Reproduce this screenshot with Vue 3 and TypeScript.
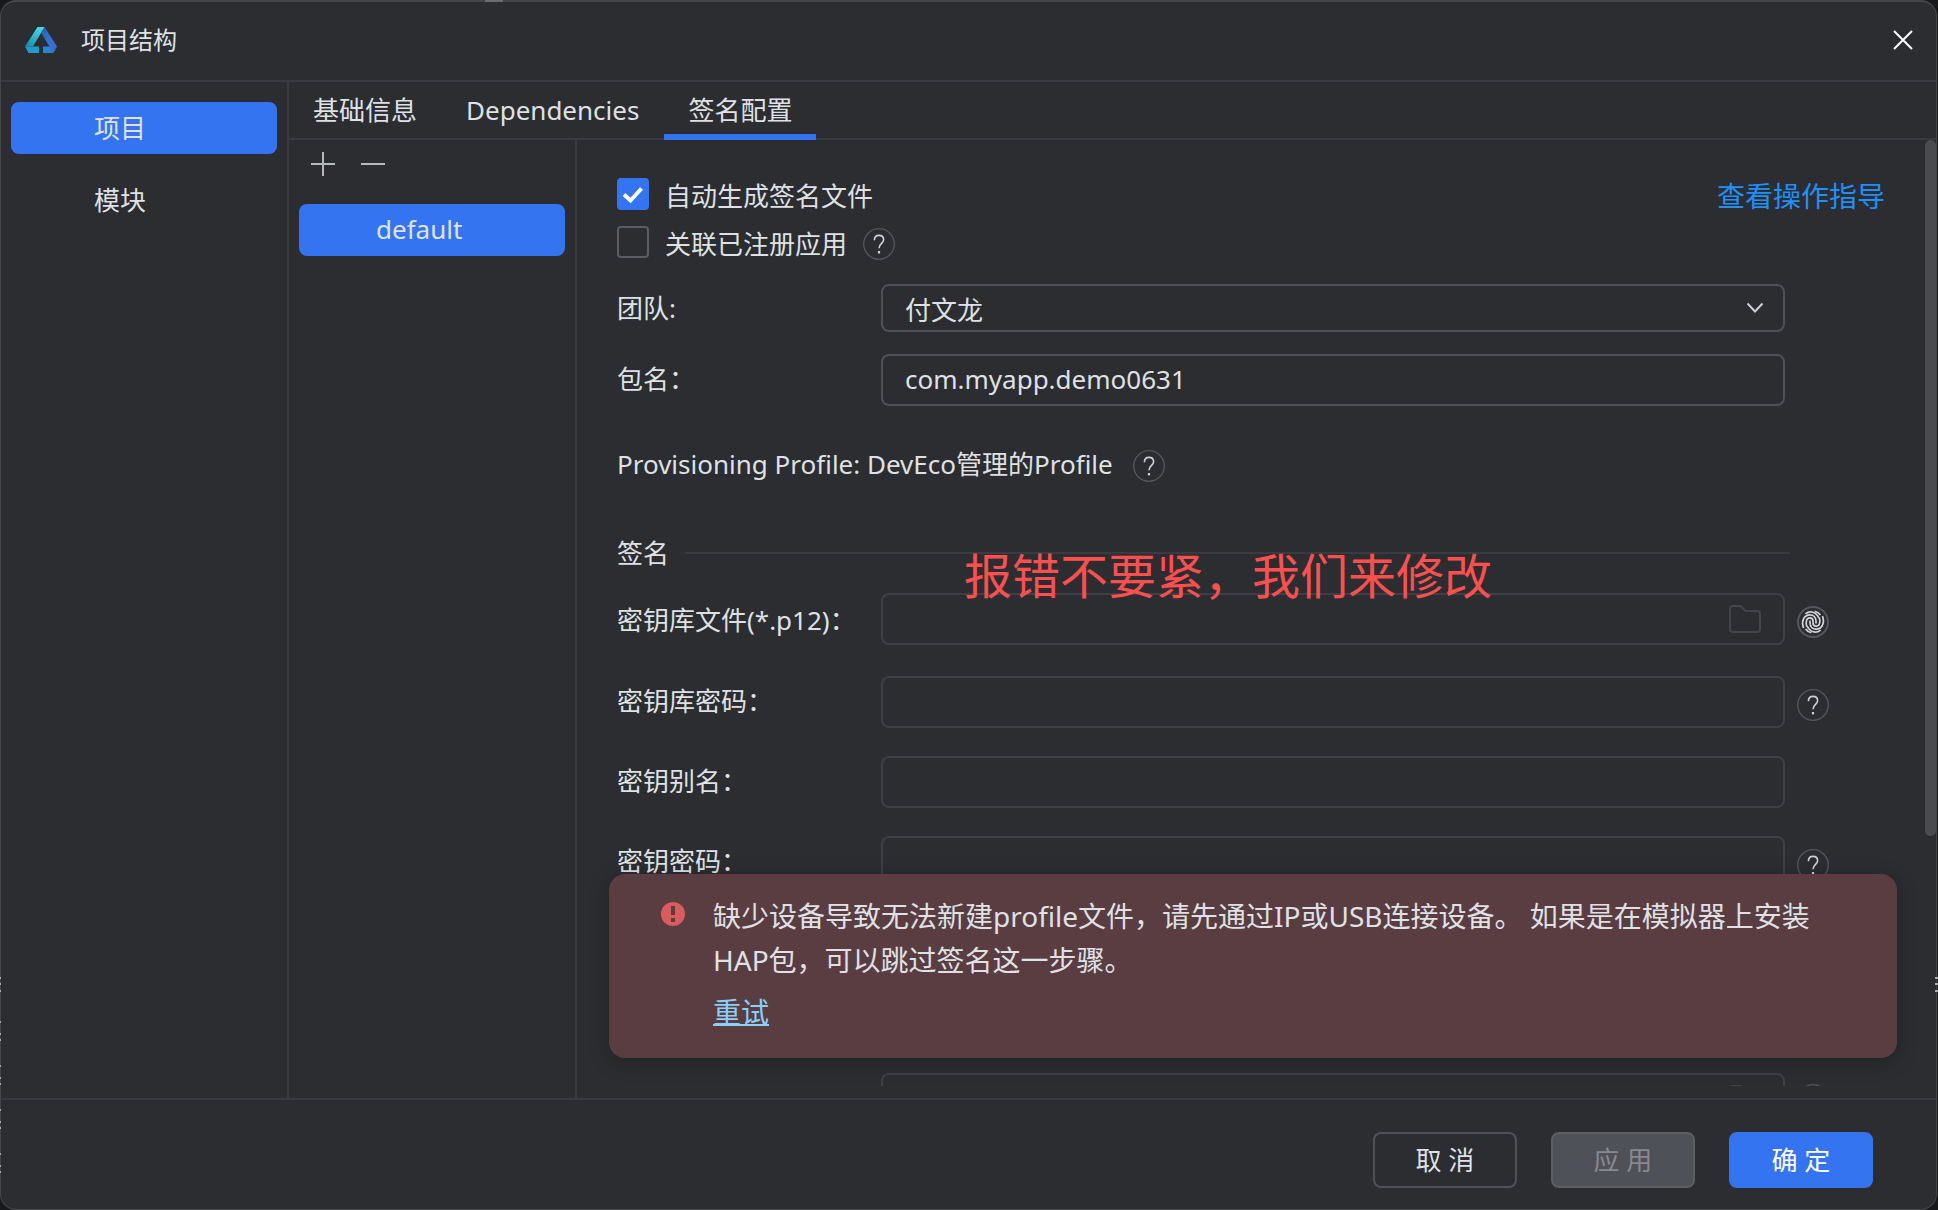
<script setup lang="ts">
import { ref } from 'vue'

interface Field {
  id: string
  label: string
  type: string
  kind: 'file' | 'plain'
  helper: 'print' | 'help' | null
}

const sections = ['项目', '模块']
const tabs = ['基础信息', 'Dependencies', '签名配置']
const activeSection = ref('项目')
const activeTab = ref('签名配置')

const autoSign = ref(true)
const linkApp = ref(false)
const team = ref('付文龙')
const bundle = ref('com.myapp.demo0631')

const fields: Field[] = [
  { id: 'store-file', label: '密钥库文件(*.p12)：', type: 'text', kind: 'file', helper: 'print' },
  { id: 'store-pass', label: '密钥库密码：', type: 'password', kind: 'plain', helper: 'help' },
  { id: 'key-alias', label: '密钥别名：', type: 'text', kind: 'plain', helper: null },
  { id: 'key-pass', label: '密钥密码：', type: 'password', kind: 'plain', helper: 'help' },
]

// Rows of the window behind that show through at the dialog's edge
const edgeMarks = [977, 983, 990, 1021, 1033, 1039, 1065, 1077, 1083, 1109, 1121, 1127, 1153, 1165, 1171]
</script>

<template>
  <div class="screen">
    <div class="dialog">
      <header class="titlebar">
        <svg class="logo" width="32" height="26" viewBox="0 0 32 26" aria-hidden="true">
          <defs>
            <linearGradient id="lg-left" x1="0.7" y1="0" x2="0.2" y2="1">
              <stop offset="0" stop-color="#45d9e4" />
              <stop offset="1" stop-color="#1b8fb0" />
            </linearGradient>
            <linearGradient id="lg-right" x1="0" y1="0" x2="1" y2="1">
              <stop offset="0" stop-color="#1f62b5" />
              <stop offset="0.5" stop-color="#2f74d2" />
              <stop offset="1" stop-color="#3d68d4" />
            </linearGradient>
          </defs>
          <path d="M12.5 0H19.5L8 19.5H0Z" fill="url(#lg-left)" />
          <path d="M0 19.5H14V26H3.5Z" fill="#1f9ccb" />
          <path d="M19.5 0L32 19.5L28.5 26L16 5.8Z" fill="url(#lg-right)" />
          <path d="M18 19.5H25L28.5 26H18Z" fill="#2b82da" />
        </svg>
        <h1>项目结构</h1>
        <button class="close" type="button" aria-label="关闭">
          <svg width="20" height="20" viewBox="0 0 20 20"><path d="M1 1L19 19M19 1L1 19" stroke="#fff" stroke-width="2" fill="none" /></svg>
        </button>
      </header>

      <div class="body">
        <nav class="sections">
          <button
            v-for="s in sections"
            :key="s"
            type="button"
            class="item"
            :class="{ active: s === activeSection }"
            @click="activeSection = s"
          >{{ s }}</button>
        </nav>

        <div class="workspace">
          <div class="tabs" role="tablist">
            <button
              v-for="t in tabs"
              :key="t"
              type="button"
              role="tab"
              :aria-selected="t === activeTab"
              class="tab"
              :class="{ active: t === activeTab }"
              @click="activeTab = t"
            >{{ t }}</button>
          </div>

          <div class="columns">
            <aside class="configs">
              <div class="tools">
                <button type="button" aria-label="添加">
                  <svg width="24" height="24" viewBox="0 0 24 24"><path d="M12 0V24M0 12H24" stroke="#b4b8bb" stroke-width="2" /></svg>
                </button>
                <button type="button" aria-label="删除">
                  <svg width="24" height="24" viewBox="0 0 24 24"><path d="M0 12H24" stroke="#b4b8bb" stroke-width="2" /></svg>
                </button>
              </div>
              <button type="button" class="item active config">default</button>
            </aside>

            <main class="pane">
              <form class="form" @submit.prevent>
                <div class="checks">
                  <div class="check-list">
                    <label class="check"><input v-model="autoSign" type="checkbox" />自动生成签名文件</label>
                    <div class="check-line">
                      <label class="check"><input v-model="linkApp" type="checkbox" />关联已注册应用</label>
                      <button type="button" class="round" aria-label="帮助">
                        <svg width="32" height="32" viewBox="0 0 32 32"><use href="#q" /></svg>
                      </button>
                    </div>
                  </div>
                  <a class="guide" href="#guide">查看操作指导</a>
                </div>

                <div class="row team">
                  <label for="team">团队:</label>
                  <div class="control">
                    <select id="team" v-model="team">
                      <option>付文龙</option>
                    </select>
                    <svg class="chevron" width="18" height="12" viewBox="0 0 18 12" aria-hidden="true"><path d="M1.5 1.5L9 9.5L16.5 1.5" fill="none" stroke="#ced0d6" stroke-width="2" /></svg>
                  </div>
                </div>

                <div class="row plain bundle">
                  <label for="bundle">包名：</label>
                  <div class="control"><input id="bundle" v-model="bundle" type="text" /></div>
                </div>

                <div class="profile">
                  <span>Provisioning Profile: DevEco管理的Profile</span>
                  <button type="button" class="round" aria-label="帮助">
                    <svg width="32" height="32" viewBox="0 0 32 32"><use href="#q" /></svg>
                  </button>
                </div>

                <h2 class="group"><span>签名</span></h2>

                <div v-for="f in fields" :key="f.id" class="row dim" :class="f.kind">
                  <label :for="f.id">{{ f.label }}</label>
                  <div class="control">
                    <input :id="f.id" :type="f.type" disabled />
                    <svg v-if="f.kind === 'file'" class="folder" width="32" height="28" viewBox="0 0 32 28" aria-hidden="true"><use href="#folder" /></svg>
                  </div>
                  <button v-if="f.helper === 'help'" type="button" class="round" aria-label="帮助">
                    <svg width="32" height="32" viewBox="0 0 32 32"><use href="#q" /></svg>
                  </button>
                  <button v-else-if="f.helper === 'print'" type="button" class="round" aria-label="生成密钥">
                    <svg width="32" height="32" viewBox="0 0 32 32" fill="none">
                      <circle cx="16" cy="16" r="15" stroke="#55575d" stroke-width="2" />
                      <g stroke="#d3d5da" stroke-width="1.7">
                        <path d="M9.7 20.6C8.2 15.4 9.8 11.9 12.8 11.9C14.8 11.9 16 13.3 16 15V17C16 18.7 17.2 20.1 19.2 20.1C22.2 20.1 23.8 16.6 22.3 11.4" />
                        <path d="M6.6 22C3.9 15.4 7 8.9 12.8 8.9C16.4 8.9 19 11.5 19 15V17.4" />
                        <path d="M25.4 10C28.1 16.6 25 23.1 19.2 23.1C15.6 23.1 13 20.5 13 17V14.6" />
                        <path d="M8.4 7.9C11.6 5.3 15.4 5.4 18.2 7.4C20 8.7 21.2 10 21.9 12" />
                        <path d="M23.6 24.1C20.4 26.7 16.6 26.6 13.8 24.6C12 23.3 10.8 22 10.1 20" />
                        <path d="M17.6 5.2C20 5.8 22 7 23.4 9" />
                        <path d="M14.4 26.8C12 26.2 10 25 8.6 23" />
                      </g>
                    </svg>
                  </button>
                </div>

                <div class="row dim file trailing">
                  <div class="control">
                    <input type="text" aria-label="Profile" disabled />
                    <svg class="folder" width="32" height="28" viewBox="0 0 32 28" aria-hidden="true"><use href="#folder" /></svg>
                  </div>
                  <button type="button" class="round" aria-label="帮助">
                    <svg width="32" height="32" viewBox="0 0 32 32"><use href="#q" /></svg>
                  </button>
                </div>
              </form>

              <p class="note">报错不要紧，我们来修改</p>
              <div class="scroll"></div>

              <section class="alert" role="alert">
                <svg width="24" height="24" viewBox="0 0 24 24" aria-hidden="true">
                  <circle cx="12" cy="12" r="12" fill="#db5c5c" />
                  <path d="M10 4H14V13H10ZM10 16H14V20H10Z" fill="#5a3d41" />
                </svg>
                <div class="message">
                  <p>缺少设备导致无法新建profile文件，请先通过IP或USB连接设备。 如果是在模拟器上安装HAP包，可以跳过签名这一步骤。</p>
                  <a href="#retry">重试</a>
                </div>
              </section>
            </main>
          </div>
        </div>
      </div>

      <footer class="actions">
        <button type="button">取 消</button>
        <button type="button" class="off" disabled>应 用</button>
        <button type="button" class="primary">确 定</button>
      </footer>
    </div>

    <svg class="edge left" width="1" height="1200" aria-hidden="true">
      <rect v-for="y in edgeMarks" :key="y" x="0" :y="y" width="1" height="2" fill="#a9abad" />
    </svg>
    <svg class="edge right" width="3" height="1200" aria-hidden="true">
      <rect v-for="y in edgeMarks.slice(0, 3)" :key="y" x="0" :y="y" width="3" height="2" fill="#a9abad" />
    </svg>
    <span class="edge top"></span>

    <svg class="defs" width="0" height="0" aria-hidden="true">
      <symbol id="q" viewBox="0 0 32 32">
        <circle cx="16" cy="16" r="15.3" fill="none" stroke="#55575d" stroke-width="1.3" />
        <path d="M11.4 12.2C11.4 9.2 13.4 7.4 16 7.4C18.7 7.4 20.6 9.2 20.6 11.8C20.6 15.2 16 15.8 16 20.2" fill="none" stroke="#ced0d6" stroke-width="1.6" />
        <path d="M14.9 23H17.1V25.4H14.9Z" fill="#ced0d6" />
      </symbol>
      <symbol id="folder" viewBox="0 0 32 28">
        <path d="M4 1H11.5L16.5 6H28Q31 6 31 9V24Q31 27 28 27H4Q1 27 1 24V4Q1 1 4 1Z" fill="none" stroke="#43454a" stroke-width="2" />
      </symbol>
    </svg>
  </div>
</template>

<style>
body {
  margin: 0;
  background: #18191b;
}
</style>

<style scoped>
* {
  box-sizing: border-box;
}

.screen {
  position: relative;
  height: 100vh;
  overflow: hidden;
}

.dialog {
  display: flex;
  flex-direction: column;
  height: 100%;
  margin-right: 1px;
  overflow: hidden;
  border: 1px solid #454648;
  border-top-width: 2px;
  border-radius: 16px;
  background: #2b2d30;
  color: #dfe1e5;
  font: 26px/32px "Noto Sans", "Noto Sans CJK SC", sans-serif;
}

button,
input,
select {
  margin: 0;
  padding: 0;
  border: 0;
  background: none;
  color: inherit;
  font: inherit;
}

button svg {
  display: block;
}

.edge {
  position: absolute;
  top: 0;
}

.edge.left {
  left: 0;
}

.edge.right {
  right: 0;
}

.edge.top {
  left: 485px;
  width: 18px;
  height: 2px;
  background: #6a6c6b;
}

.defs {
  position: absolute;
}

.titlebar {
  display: flex;
  flex: none;
  align-items: center;
  height: 80px;
  padding: 0 23px 3px 24px;
  border-bottom: 2px solid #393b40;
}

.titlebar h1 {
  flex: 1;
  margin: 0 0 0 24px;
  font-size: 24px;
  font-weight: 400;
}

.body {
  display: flex;
  flex: 1;
  min-height: 0;
}

.sections {
  display: flex;
  flex: none;
  flex-direction: column;
  gap: 20px;
  width: 288px;
  padding: 20px 10px;
  border-right: 2px solid #393b40;
}

.item {
  flex: none;
  height: 52px;
  padding-left: 83px;
  border-radius: 8px;
  text-align: left;
}

.item.active {
  background: #3574f0;
}

.item.config {
  padding: 0 0 2px 77px;
}

.workspace {
  display: flex;
  flex: 1;
  flex-direction: column;
  min-width: 0;
}

.tabs {
  display: flex;
  flex: none;
  gap: 1px;
  height: 58px;
  border-bottom: 2px solid #393b40;
}

.tab {
  height: 58px;
  padding: 4px 24px 0;
  border-bottom: 6px solid transparent;
}

.tab.active {
  border-color: #3574f0;
}

.columns {
  display: flex;
  flex: 1;
  min-height: 0;
}

.configs {
  display: flex;
  flex: none;
  flex-direction: column;
  gap: 28px;
  width: 288px;
  padding: 12px 10px;
  border-right: 2px solid #393b40;
}

.tools {
  display: flex;
  gap: 26px;
  padding: 0 12px;
}

.pane {
  position: relative;
  flex: 1;
  min-width: 0;
  padding-bottom: 12px;
}

.form {
  height: 100%;
  padding: 38px 0 0 40px;
  overflow: hidden;
}

.checks {
  display: flex;
  justify-content: space-between;
  padding-right: 51px;
  line-height: 36px;
}

.check-list {
  display: flex;
  flex-direction: column;
  gap: 12px;
}

.check-line,
.check {
  display: flex;
  align-items: center;
  gap: 16px;
  height: 36px;
}

.check input {
  align-self: flex-start;
  width: 32px;
  height: 32px;
  border: 2px solid #5a5d63;
  border-radius: 4px;
  appearance: none;
}

.check input:checked {
  border-color: #3574f0;
  background: #3574f0 url("data:image/svg+xml,%3Csvg xmlns='http://www.w3.org/2000/svg' viewBox='0 0 28 28'%3E%3Cpath d='M5 14.5L11.5 20.5L22.5 8.5' fill='none' stroke='white' stroke-width='4'/%3E%3C/svg%3E") center / 28px 28px no-repeat;
}

.guide {
  color: #1e90ff;
  font-size: 28px;
  text-decoration: none;
}

.round {
  flex: none;
  width: 32px;
  height: 32px;
}

.row {
  display: flex;
  align-items: center;
  gap: 12px;
  margin-top: 28px;
  padding-right: 151px;
}

.row label {
  flex: none;
  width: 252px;
}

.row.plain label {
  padding-bottom: 2px;
}

.row.file label {
  padding-top: 2px;
}

.row .round {
  align-self: flex-start;
  margin: 13px -44px 0 0;
}

.row.team {
  margin-top: 22px;
}

.row.bundle {
  margin-top: 22px;
}

.row.file {
  margin: 24px 0 31px;
}

.row.trailing {
  margin-top: 185px;
  padding-left: 264px;
}

.row.trailing .round {
  margin-top: 11px;
}

.control {
  position: relative;
  flex: 1;
}

.control input,
.control select {
  display: block;
  width: 100%;
  height: 52px;
  padding: 0 22px 2px;
  border: 2px solid #4e5157;
  border-radius: 8px;
  outline: none;
  appearance: none;
}

.control select {
  height: 48px;
  padding: 3px 22px 0;
}

.dim .control input {
  border-color: #3e4045;
}

.chevron {
  position: absolute;
  top: 18px;
  right: 21px;
  pointer-events: none;
}

.folder {
  position: absolute;
  top: 12px;
  right: 24px;
}

.profile {
  display: flex;
  align-items: center;
  gap: 20px;
  margin-top: 44px;
}

.profile span {
  padding-bottom: 4px;
  line-height: 28px;
}

.group {
  display: flex;
  align-items: center;
  gap: 16px;
  margin: 55px 146px 0 0;
  font-size: 26px;
  font-weight: 400;
}

.group::after {
  flex: 1;
  height: 2px;
  background: #393b40;
  content: "";
}

.note {
  position: absolute;
  top: 404px;
  left: 387px;
  margin: 0;
  color: #ff4f4f;
  font-size: 48px;
  line-height: 64px;
  white-space: nowrap;
}

.scroll {
  position: absolute;
  top: 0;
  right: 0;
  bottom: 262px;
  width: 11px;
  border-radius: 6px;
  background: #4a4b4d;
}

.alert {
  position: absolute;
  right: 39px;
  bottom: 40px;
  left: 32px;
  display: flex;
  gap: 28px;
  height: 184px;
  padding: 20px 56px 0 52px;
  border-radius: 16px;
  background: #5a3d41;
  box-shadow: 0 4px 20px rgba(0, 0, 0, 0.25);
  font-size: 28px;
  line-height: 44px;
}

.alert > svg {
  flex: none;
  margin-top: 8px;
}

.message p {
  margin: 0 0 8px;
}

.message a {
  color: #8ad0ff;
  text-decoration-thickness: 2px;
}

.actions {
  display: flex;
  flex: none;
  justify-content: flex-end;
  gap: 34px;
  padding: 32px 63px 21px;
  border-top: 2px solid #393b40;
}

.actions button {
  width: 144px;
  height: 56px;
  border: 2px solid #4e5157;
  border-radius: 8px;
}

.actions .off {
  border-color: #5c5e60;
  background: #4e5157;
  color: #868a91;
}

.actions .primary {
  border-color: #3574f0;
  background: #3574f0;
  color: #fff;
}
</style>
